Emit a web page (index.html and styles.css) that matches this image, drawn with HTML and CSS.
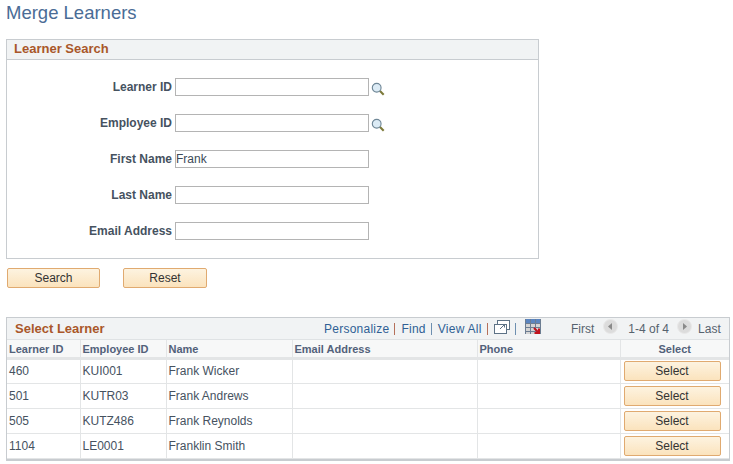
FILE: index.html
```html
<!DOCTYPE html>
<html lang="en">
<head>
    <meta charset="UTF-8">
    <title>Merge Learners</title>
    <link rel="stylesheet" href="styles.css">
</head>
<body>
    <h1 class="page-title">Merge Learners</h1>

    <div class="search-box">
        <div class="box-header">Learner Search</div>
        <div class="search-form">
            <div class="form-row">
                <label>Learner ID</label>
                <input type="text">
                <svg class="lookup" width="14" height="14" viewBox="0 0 16 16">
                    <line x1="10" y1="10" x2="14.5" y2="14.5" stroke="#7d7a3a" stroke-width="2.4"/>
                    <circle cx="6.5" cy="6.5" r="5" fill="#dcebf5" stroke="#6f8797" stroke-width="1.3"/>
                </svg>
            </div>
            <div class="form-row">
                <label>Employee ID</label>
                <input type="text">
                <svg class="lookup" width="14" height="14" viewBox="0 0 16 16">
                    <line x1="10" y1="10" x2="14.5" y2="14.5" stroke="#7d7a3a" stroke-width="2.4"/>
                    <circle cx="6.5" cy="6.5" r="5" fill="#dcebf5" stroke="#6f8797" stroke-width="1.3"/>
                </svg>
            </div>
            <div class="form-row">
                <label>First Name</label>
                <input type="text" value="Frank">
            </div>
            <div class="form-row">
                <label>Last Name</label>
                <input type="text">
            </div>
            <div class="form-row">
                <label>Email Address</label>
                <input type="text">
            </div>
        </div>
    </div>

    <div class="search-actions">
        <button class="btn btn-search">Search</button>
        <button class="btn btn-reset">Reset</button>
    </div>

    <div class="grid-box">
        <div class="grid-header">
            <div class="grid-title">Select Learner</div>
            <div class="grid-tools">
                <a>Personalize</a><span class="sep sep-red"></span>
                <a>Find</a><span class="sep"></span>
                <a>View All</a><span class="sep sep-red"></span>
                <svg class="tool-icon" width="16" height="14" viewBox="0 0 16 14">
                    <rect x="3.5" y="0.5" width="12" height="9" fill="#fff" stroke="#5d7286"/>
                    <rect x="0.5" y="4.5" width="12" height="9" fill="#fff" stroke="#5d7286"/>
                    <path d="M6 9 L10 5 M7.5 4.5 H10.5 V7.5" fill="none" stroke="#5d7286"/>
                </svg>
                <span class="sep sep-last"></span>
                <svg class="tool-icon" width="16" height="16" viewBox="0 0 16 16">
                    <rect width="16" height="4" fill="#5b85c0"/>
                    <rect y="4" width="16" height="11" fill="#d4d4d4"/>
                    <path d="M0.5 0 V15 M5.5 0 V15 M10.5 0 V15 M15.5 0 V15 M0 4.5 H16 M0 8.5 H16 M0 12.5 H16" stroke="#6c7d92" stroke-width="1" fill="none"/>
                    <path d="M9 9 L13 13 M14 9.5 V14 H9.5" stroke="#c0121c" stroke-width="2" fill="none"/>
                </svg>
            </div>
            <div class="grid-pager">
                <span>First</span>
                <span class="pager-btn pager-prev">
                    <svg width="15" height="15" viewBox="0 0 15 15"><circle cx="7.5" cy="7.5" r="7" fill="#dcdcdc" stroke="#e8e8e8"/><path d="M9 4 L5 7.5 L9 11 Z" fill="#8a8a8a"/></svg>
                </span>
                <span>1-4 of 4</span>
                <span class="pager-btn pager-next">
                    <svg width="15" height="15" viewBox="0 0 15 15"><circle cx="7.5" cy="7.5" r="7" fill="#dcdcdc" stroke="#e8e8e8"/><path d="M6 4 L10 7.5 L6 11 Z" fill="#8a8a8a"/></svg>
                </span>
                <span>Last</span>
            </div>
        </div>
        <table class="grid-table">
            <colgroup>
                <col class="col-learner">
                <col class="col-employee">
                <col class="col-name">
                <col class="col-email">
                <col class="col-phone">
                <col class="col-select">
            </colgroup>
            <thead>
                <tr>
                    <th>Learner ID</th>
                    <th>Employee ID</th>
                    <th>Name</th>
                    <th>Email Address</th>
                    <th>Phone</th>
                    <th class="center">Select</th>
                </tr>
            </thead>
            <tbody>
                <tr>
                    <td>460</td><td>KUI001</td><td>Frank Wicker</td><td></td><td></td>
                    <td class="action"><button class="btn btn-row">Select</button></td>
                </tr>
                <tr>
                    <td>501</td><td>KUTR03</td><td>Frank Andrews</td><td></td><td></td>
                    <td class="action"><button class="btn btn-row">Select</button></td>
                </tr>
                <tr>
                    <td>505</td><td>KUTZ486</td><td>Frank Reynolds</td><td></td><td></td>
                    <td class="action"><button class="btn btn-row">Select</button></td>
                </tr>
                <tr>
                    <td>1104</td><td>LE0001</td><td>Franklin Smith</td><td></td><td></td>
                    <td class="action"><button class="btn btn-row">Select</button></td>
                </tr>
            </tbody>
        </table>
    </div>
</body>
</html>
```

FILE: styles.css
```css
body {
    font-family: "Liberation Sans", Arial, sans-serif;
    font-size: 12px;
    color: #3d4a57;
    margin: 0;
    padding: 0 6px;
    background: white;
}
.page-title {
    font-size: 18.5px;
    font-weight: normal;
    line-height: 21px;
    color: #4a6c96;
    margin: 0;
    padding-top: 2px;
    height: 39px;
    box-sizing: border-box;
}
.search-box {
    width: 533px;
    height: 220px;
    box-sizing: border-box;
    border: 1px solid #c8ccd0;
}
.box-header {
    height: 20px;
    line-height: 18px;
    box-sizing: border-box;
    padding-left: 7px;
    background: #f1f3f4;
    border-bottom: 1px solid #c8ccd0;
    font-size: 13px;
    font-weight: bold;
    color: #a9572a;
}
.search-form {
    padding-top: 18px;
    display: flex;
    flex-direction: column;
    gap: 18px;
}
.form-row {
    display: flex;
    align-items: center;
    height: 18px;
}
.form-row label {
    width: 165px;
    text-align: right;
    font-weight: bold;
    color: #46525f;
    margin-right: 3px;
}
.form-row input {
    width: 194px;
    height: 18px;
    box-sizing: border-box;
    border: 1px solid #b4b4b4;
    padding: 0;
    font-family: inherit;
    font-size: 12px;
    color: #3d4a57;
    outline: none;
}
.lookup {
    margin: 3px 0 0 2px;
}
.search-actions {
    display: flex;
    gap: 23px;
    margin: 9px 0 29px 1px;
}
.btn {
    height: 20px;
    padding: 0;
    border: 1px solid #e0aa70;
    border-radius: 2px;
    background: linear-gradient(#fdf3e0, #fbe3bd);
    font-family: inherit;
    font-size: 12px;
    color: #333;
}
.btn-search {
    width: 93px;
}
.btn-reset {
    width: 84px;
}
.btn-row {
    width: 97px;
    display: block;
}
.grid-box {
    width: 724px;
    box-sizing: border-box;
    border: 1px solid #c8ccd0;
    border-bottom-width: 2px;
}
.grid-header {
    display: flex;
    align-items: center;
    height: 22px;
    background: #f1f3f4;
    border-bottom: 1px solid #dfe2e4;
    box-sizing: border-box;
}
.grid-title {
    width: 317px;
    padding-left: 8px;
    box-sizing: border-box;
    font-size: 13px;
    font-weight: bold;
    color: #a9572a;
}
.grid-tools {
    display: flex;
    align-items: center;
    color: #2f5f94;
    width: 247px;
    letter-spacing: 0.25px;
}
.sep {
    width: 1px;
    height: 12px;
    background: #6d8fb0;
    margin: 0 6px 0 5px;
}
.sep-red {
    background: #b5705a;
}
.sep-last {
    margin-right: 9px;
}
.tool-icon {
    margin-top: -4px;
}
.grid-pager {
    display: flex;
    align-items: center;
    color: #56626e;
}
.pager-btn {
    display: flex;
}
.pager-prev {
    margin: -4px 10px 0 9px;
}
.pager-next {
    margin: -4px 6px 0 8px;
}
.grid-table {
    width: 100%;
    border-collapse: collapse;
    table-layout: fixed;
}
.col-learner { width: 73px; }
.col-employee { width: 86px; }
.col-name { width: 126px; }
.col-email { width: 185px; }
.col-phone { width: 143px; }
.grid-table th {
    height: 18px;
    padding: 1px 2px 0;
    box-sizing: border-box;
    background: #f7f8f8;
    border-right: 1px solid #e3e5e6;
    border-bottom: 3px solid #e3e5e6;
    text-align: left;
    font-size: 11px;
    font-weight: bold;
    color: #52617a;
}
.grid-table td {
    height: 25px;
    padding: 0 2px;
    box-sizing: border-box;
    border-right: 1px solid #e3e5e6;
    border-bottom: 1px solid #e3e5e6;
    color: #46525f;
}
.grid-table th:last-child,
.grid-table td:last-child {
    border-right: none;
}
.grid-table th.center {
    text-align: center;
}
.grid-table td.action {
    padding: 0 3px;
}
```
